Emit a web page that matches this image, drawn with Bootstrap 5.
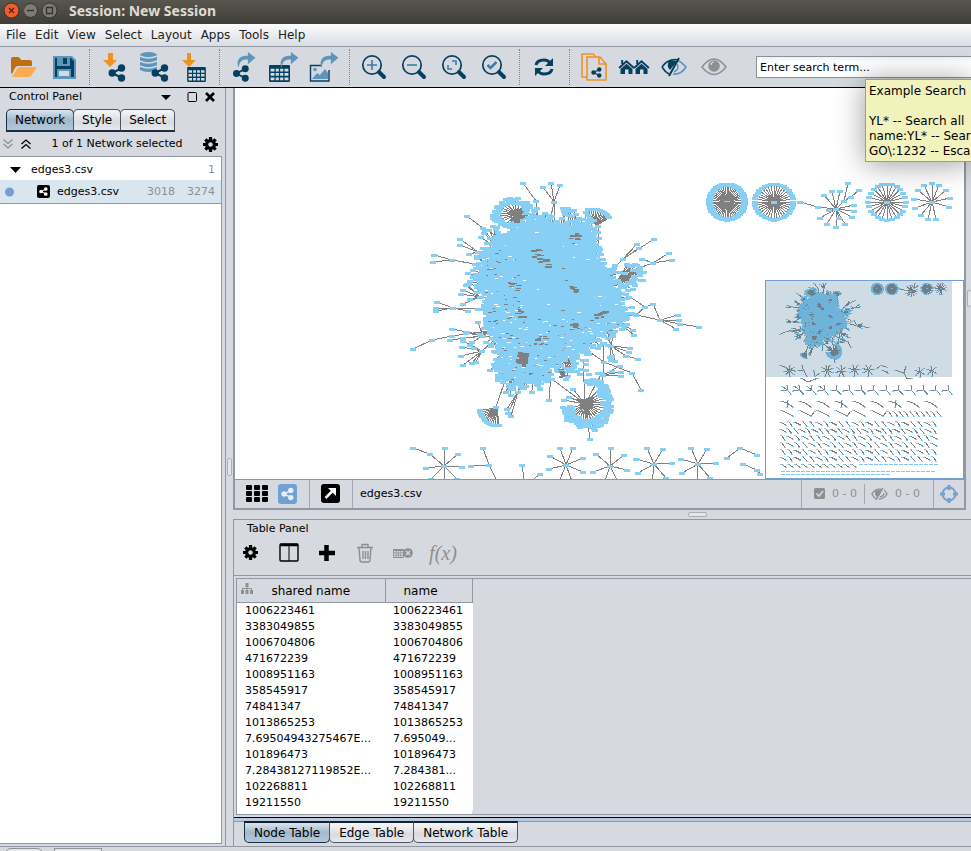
<!DOCTYPE html>
<html lang="en">
<head>
<meta charset="utf-8">
<meta name="viewport" content="width=device-width, initial-scale=1">
<title>Session: New Session</title>
<link rel="stylesheet" href="https://cdn.jsdelivr.net/npm/bootstrap@5.3.0/dist/css/bootstrap.min.css">
<style>
:root{--face:#d6d9df;--line:#9297a1;--navy:#04405f;--sky:#5e96ba;--amber:#ee9322;--off:#8e8f91}
body{font:12px/16px "DejaVu Sans",sans-serif;color:#000;background:var(--face)}
button{font:inherit;color:inherit;background:none;border:0;padding:0}
svg{display:block}
.t11{font-size:11px}
.grey{color:var(--off)}
.titlebar{height:24px;padding-left:3px;background:linear-gradient(#58564e,#3f3d38);color:#dfdbd2;font:bold 14px/22px "Noto Sans",sans-serif}
.titlebar h1{font:inherit;margin:0 0 0 11px}
.winbtn{width:17px;height:20px}
.menus{height:23px;gap:9px;padding-left:6px;background:linear-gradient(#fcfcfd,#d9dce1);border-bottom:1px solid var(--line)}
.menus a{color:#222;text-decoration:none}
.tools{height:41px;padding-left:4px;border-bottom:1px solid #000}
.tools button{width:40px;height:40px;flex:none}
.dots{width:10px;flex:none;display:flex;justify-content:center;padding:2px 0}
.dots::before{content:"";border-left:1px dotted #7d828c}
.find{height:22px;margin-left:22px;padding:0 3px;font-size:11px;border:1px solid #8c9098;border-right:0;background:linear-gradient(#f0f0f2,#fff 5px);min-width:0;border-radius:0}
.find::placeholder{color:#000;opacity:1}
.tip{top:79px;right:0;width:106px;height:83px;padding:4px 0 0 3px;background:#f2f2bd;border:1px solid #989a9f;border-right:0;line-height:15px;white-space:pre;overflow:hidden;box-shadow:0 2px 30px rgba(0,0,0,.4);z-index:5}
.side{width:225px;flex:none;padding-bottom:2px}
.panehead{height:21px;padding:0 8px 3px 9px}
.sidetabs{padding-left:6px}
.tab{height:22px;border:1px solid #4c5563;background:linear-gradient(#f6f7f8,#d8dbe1 60%,#e6e8ec)}
.sidetabs .tab{height:23px;border-bottom:2px solid #222b3a;border-radius:5px 5px 0 0;margin-right:-1px;padding:0 8px}
.tab.on{background:linear-gradient(#dce5ed,#a2b8cc 50%,#b5c8da);border-color:#1c2c40}
.netbar{height:24px;padding:0 7px 0 3px}
.tree{background:#fff;border:1px solid var(--line);border-left:0;margin-right:3px}
.trow{height:23px;padding-right:6px}
.trow.sel{height:24px;padding-top:1px;background:#dae6ef;border-bottom:1px solid var(--line)}
.trow:first-child{padding-top:2px}
.vsplit{width:8px;flex:none;border-left:1px solid var(--line)}
.grip{border:1px solid #a9adb5;border-radius:2px;background:#e4e6ea}
.vsplit .grip{width:5px;height:18px}
.frame{min-width:0;border:solid var(--line);border-width:0 2px 2px}
.edge{width:5px;flex:none}
.edge .grip{width:5px;height:17px;border-right:0;margin-left:1px}
.canvas{background:#fff;overflow:hidden;min-height:200px}
.bird{right:0;bottom:0;width:199px;height:199px;background:#fff;border:1px solid #709fd0}
.statusbar{height:29px;border-top:1px solid var(--line)}
.gridbtn{margin:0 10px 0 11px}
.sharebtn{margin-right:11px}
.popbtn{margin:0 11px}
.docname{margin-left:7px}
.count{gap:7px;padding:0 7px 0 12px}
.hidden-count{padding:0 13px 0 6px}
.aim{padding:0 5px}
.vl{width:1px;align-self:stretch;background:#a4a8b1;flex:none}
.hsplit{height:9px;padding-left:455px}
.hsplit .grip{width:19px;height:5px}
.lower{border:solid var(--line);border-width:1px 0 0 1px}
.lowhead{padding-left:13px;line-height:18px}
.lowtools button{width:38px;height:30px}
.lowtools{padding-bottom:7px;border-bottom:1px solid var(--line)}
.lowtools svg{margin:0 auto}
.holder{margin:2px 0 0 2px;border:solid var(--line);border-width:1px 0 1px 1px}
.grid{width:235px;table-layout:fixed;border-collapse:collapse;background:#fff}
.grid th{height:24px;font-weight:400;text-align:center;background:var(--face);border-right:1px solid var(--line);border-bottom:1px solid var(--line);padding:1px 0 0}
.grid td{height:16px;line-height:16px;font-size:11px;padding:0 0 0 8px;white-space:nowrap}
.endpad{height:3px;width:235px;background:#fff}
.band{margin-top:2px;height:5px;border-top:1px solid #000;border-bottom:1px solid var(--line);background:#b5cadf}
.lowtabs{padding-left:10px;height:25px;margin-top:-1px}
.lowtabs .tab{border-top:2px solid #14202e;border-radius:0 0 5px 5px;margin-right:-1px;padding:0 9px;line-height:18px}
.foot{height:5px;border-top:1px solid var(--line);padding:1px 0 0 5px;overflow:hidden;gap:11px}
.foot span{width:38px;height:9px;border:1px solid #8d939d;background:#e4e7eb}
.foot span + span{width:48px}
.fx{font:italic 20px/28px "Liberation Serif",serif}
.e{stroke:#808080;fill:none}.n{fill:#87cff5}
.bird .n{fill:#7fc9f2}
</style>
<script src="https://cdn.jsdelivr.net/npm/bootstrap@5.3.0/dist/js/bootstrap.bundle.min.js"></script>
</head>
<body class="vh-100 d-flex flex-column overflow-hidden position-relative">

<svg width="0" height="0" class="position-absolute" aria-hidden="true">
  <defs>
    <symbol id="share" viewBox="0 0 18 18"><path d="M14 4 4 9l10 5" fill="none" stroke="currentColor" stroke-width="2"/><circle cx="13.500" cy="4" r="3.700" fill="currentColor"/><circle cx="4.200" cy="9" r="3.700" fill="currentColor"/><circle cx="13.500" cy="14" r="3.700" fill="currentColor"/></symbol>
    <symbol id="cells" viewBox="0 0 20 16"><path fill-rule="evenodd" fill="currentColor" d="M1 0h18q1 0 1 1v14q0 1-1 1H1q-1 0-1-1V1q0-1 1-1zM1.500 3.500v2.700h3.700V3.500zM6.400 3.500v2.700h3V3.500zM10.600 3.500v2.700h3V3.500zM14.800 3.500v2.700h3.700V3.500zM1.500 7.500v2.700h3.700V7.500zM6.400 7.500v2.700h3V7.500zM10.600 7.500v2.700h3V7.500zM14.800 7.500v2.700h3.700V7.500zM1.500 11.700v2.700h3.700v-2.700zM6.400 11.700v2.700h3v-2.700zM10.600 11.700v2.700h3v-2.700zM14.800 11.700v2.700h3.700v-2.700z"/></symbol>
    <symbol id="gear" viewBox="0 0 16 16"><path d="M8 0v16M0 8h16M2.500 2.500l11 11M13.500 2.500l-11 11" stroke="currentColor" stroke-width="3.400"/><circle cx="8" cy="8" r="5.800" fill="currentColor"/><circle cx="8" cy="8" r="2.400" fill="#d6d9df"/></symbol>
    <symbol id="lens" viewBox="0 0 40 40"><path d="m25 25 5 5" stroke="#04405f" stroke-width="4" stroke-linecap="round"/><circle cx="18" cy="18" r="9.200" fill="none" stroke="#04405f" stroke-width="1.700"/></symbol>
    <symbol id="sweep" viewBox="0 0 20 18"><path fill="#5e96ba" d="M2 17C-1 8 4 3 12 4V0l8 6-8 7V8C6 7 3 10 2 17z"/></symbol>
    <symbol id="house" viewBox="0 0 16 14"><path fill="#04405f" d="M8 3.800 14 9v5h-4V9.500H6.500V14H2V9z"/><path fill="none" stroke="#04405f" stroke-width="1.900" d="M.6 8 8 1.300 15.400 8M3.700 0v4"/></symbol>
  </defs>
</svg>

<header class="titlebar d-flex">
  <button class="winbtn" aria-label="Close"><svg width="17" height="20"><circle cx="8.500" cy="10.500" r="7.500" fill="#ee5d2c" stroke="#34322e"/><path d="m6 8 5 5m0-5-5 5" stroke="#5a2411" stroke-width="1.300"/></svg></button>
  <button class="winbtn ms-1" aria-label="Minimize"><svg width="17" height="20"><circle cx="6.500" cy="10.500" r="7" fill="#7d7b73" stroke="#34322e"/><path d="M3 10.500h7" stroke="#34322e" stroke-width="1.300"/></svg></button>
  <button class="winbtn" aria-label="Maximize"><svg width="17" height="20"><circle cx="8.500" cy="10.500" r="7.500" fill="#7d7b73" stroke="#34322e"/><path d="M5.500 7.500h6v6h-6z" fill="none" stroke="#34322e" stroke-width="1.300"/></svg></button>
  <h1>Session: New Session</h1>
</header>
<nav class="menus d-flex align-items-center" aria-label="Menu">
  <a href="#">File</a><a href="#">Edit</a><a href="#">View</a><a href="#">Select</a><a href="#">Layout</a><a href="#">Apps</a><a href="#">Tools</a><a href="#">Help</a>
</nav>

<div class="tools d-flex flex-shrink-0" role="toolbar" aria-label="Main tools">
  <button aria-label="Open"><svg width="40" height="40"><path fill="#bf6f0e" d="M7 12q0-2 2-2h5q2 0 3 3h9q2 0 2 2v4H14q-2 0-3 2l-3 6q-1 0-1-2z"/><path fill="#fbab4d" d="m8 30 5-8q1-2 3-2h17l-6 9q-1 1-3 1z"/></svg></button>
  <button aria-label="Save"><svg width="40" height="40"><path fill="#5e96ba" d="M9 9h19l4 4v19H9z"/><path fill="#04405f" d="M11 11h2v8h13v-8h1l3 3v16H11z"/><path fill="#5e96ba" d="M13 11h12v7H13zM13 22h14v8H13z"/><path fill="#04405f" d="M19 11h4v6h-4z"/><path fill="#d6d9df" d="M15 24h10v5H15z"/></svg></button>
  <span class="dots"></span>
  <button aria-label="Import network"><svg width="40" height="40" color="#04405f"><path fill="#ee9322" d="M14 6h5v7h4l-7 7-7-7h5z"/><use href="#share" x="14" y="17" width="18" height="18"/></svg></button>
  <button aria-label="Import from database"><svg width="40" height="40" color="#04405f"><path fill="#5e96ba" d="M6 8v15q8 4 17 0V8z"/><ellipse cx="14.500" cy="8" rx="8.500" ry="3" fill="#5e96ba"/><path d="M6 9q8 4 17 0M6 14q8 4 17 0M6 19q8 4 17 0" fill="none" stroke="#d6d9df" stroke-width="1.500"/><use href="#share" x="17" y="17" width="18" height="18"/></svg></button>
  <button aria-label="Import table"><svg width="40" height="40" color="#04405f"><path fill="#ee9322" d="M13 6h4v7h5l-7 7-7-7h5z"/><use href="#cells" x="13" y="20" width="19" height="15"/></svg></button>
  <span class="dots"></span>
  <button aria-label="Export network"><svg width="40" height="40" color="#04405f"><use href="#sweep" x="12" y="5" width="20" height="17"/><use href="#share" x="8" y="18" width="18" height="17"/></svg></button>
  <button aria-label="Export table"><svg width="40" height="40" color="#04405f"><use href="#cells" x="5" y="18" width="21" height="17"/><use href="#sweep" x="15" y="5" width="20" height="17"/></svg></button>
  <button aria-label="Export image"><svg width="40" height="40"><path fill="none" stroke="#04405f" stroke-width="1.400" d="M18 18.500H6.500v15.500H25V23"/><path fill="#5e96ba" d="m8 32 5-6 3 2 5-6 3 4v6z"/><circle cx="11" cy="22.500" r="1.800" fill="#5e96ba"/><use href="#sweep" x="15" y="5" width="20" height="17"/></svg></button>
  <span class="dots"></span>
  <button aria-label="Zoom in"><svg width="40" height="40"><use href="#lens" width="40" height="40"/><path d="M13 18h10M18 13v10" stroke="#3c7ca8" stroke-width="1.600"/></svg></button>
  <button aria-label="Zoom out"><svg width="40" height="40"><use href="#lens" width="40" height="40"/><path d="M13 18h10" stroke="#3c7ca8" stroke-width="1.600"/></svg></button>
  <button aria-label="Fit content"><svg width="40" height="40"><use href="#lens" width="40" height="40"/><path d="M18 14h4v4M18 22h-4v-4" fill="none" stroke="#3c7ca8" stroke-width="1.600"/></svg></button>
  <button aria-label="Fit selected"><svg width="40" height="40"><use href="#lens" width="40" height="40"/><path d="m13.500 18 3 3 6-6" fill="none" stroke="#3c7ca8" stroke-width="2.500"/></svg></button>
  <span class="dots"></span>
  <button aria-label="Refresh"><svg width="40" height="40"><path fill="none" stroke="#04405f" stroke-width="3" d="M12 18q1-5 8-5 4 0 6 3M28 22q-1 5-8 5-4 0-6-3"/><path fill="#04405f" d="M29 11v8h-8zM11 29v-8h8z"/></svg></button>
  <span class="dots"></span>
  <button aria-label="New network from selection"><svg width="40" height="40" color="#04405f"><path fill="#d6d9df" stroke="#ee9322" stroke-width="1.600" d="M8 7h11l4 4v19H8z"/><path fill="#d6d9df" stroke="#ee9322" stroke-width="1.600" d="M13 10h13l6 7v16H13zM25 10v7h7"/><use href="#share" x="17" y="20" width="11" height="11"/></svg></button>
  <button aria-label="First neighbors"><svg width="40" height="40"><use href="#house" x="4" y="13" width="17" height="14"/><use href="#house" x="19" y="13" width="17" height="14"/></svg></button>
  <button aria-label="Hide selected"><svg width="40" height="40"><path fill="none" stroke="#5e96ba" stroke-width="1.600" d="M23 13q5 2 9 7-5 8-13 7M23 17q3 5-3 8"/><path fill="none" stroke="#04405f" stroke-width="1.600" d="M8 20q6-9 17-7M8 20q3 5 7 7"/><path fill="#04405f" d="M15 14h8l-7 9q-4-4-1-9z"/><path stroke="#04405f" stroke-width="2" d="M25 11 15 29"/></svg></button>
  <button aria-label="Show all"><svg width="40" height="40"><path fill="none" stroke="#8e8f91" stroke-width="1.500" d="M8 20q12-16 24 0-12 15-24 0z"/><circle cx="20" cy="19" r="5.800" fill="#8e8f91"/><path d="M17 18q0-3 3-3" stroke="#d6d9df" fill="none" stroke-width="1.200"/></svg></button>
  <input class="find flex-fill align-self-center" type="search" placeholder="Enter search term..." aria-label="Search">
</div>
<div class="tip position-absolute" role="tooltip">Example Search

YL* -- Search all
name:YL* -- Sear
GO\:1232 -- Esca</div>

<div class="d-flex flex-fill" style="min-height:0">
  <aside class="side d-flex flex-column">
    <div class="panehead t11 d-flex align-items-center">
      <span class="me-auto">Control Panel</span>
      <button aria-label="Panel menu"><svg width="10" height="6"><path d="M0 1h10L5 6z"/></svg></button>
      <button class="ms-3" aria-label="Float"><svg width="10" height="10"><rect x="1" y=".5" width="8.500" height="9" rx="1" fill="none" stroke="#000"/></svg></button>
      <button class="ms-1 ps-1" aria-label="Close panel"><svg width="12" height="10"><path d="m1 1 8 8m0-8-8 8" stroke="#000" stroke-width="2.600"/></svg></button>
    </div>
    <div class="sidetabs d-flex" role="tablist">
      <button class="tab on" role="tab" aria-selected="true">Network</button><button class="tab" role="tab">Style</button><button class="tab" role="tab">Select</button>
    </div>
    <div class="netbar t11 d-flex align-items-center">
      <button aria-label="Expand all"><svg width="10" height="10" fill="none" stroke="#8e8f91" stroke-width="1.200"><path d="m.5.5 4.500 4 4.500-4M.5 5 5 9l4.500-4"/></svg></button>
      <button class="ms-2" aria-label="Collapse all"><svg width="10" height="10" fill="none" stroke="#000" stroke-width="1.300"><path d="M.5 5 5 1l4.500 4M.5 9.500 5 5.500l4.500 4"/></svg></button>
      <span class="mx-auto">1 of 1 Network selected</span>
      <button aria-label="Network options"><svg width="15" height="15"><use href="#gear" width="15" height="15"/></svg></button>
    </div>
    <div class="tree flex-fill t11">
      <div class="trow d-flex align-items-center"><svg class="mx-2 px-0" width="15" height="6"><path d="M2 0h11L7.500 6z"/></svg><span class="me-auto">edges3.csv</span><span class="grey">1</span></div>
      <div class="trow sel d-flex align-items-center"><svg width="57" height="16"><circle cx="9.500" cy="8" r="4.500" fill="#72a0d2"/><rect x="37" y="1" width="13" height="13" rx="2"/><g color="#fff"><use href="#share" x="39" y="3" width="9" height="9"/></g></svg><span class="me-auto">edges3.csv</span><span class="grey me-2 pe-1">3018</span><span class="grey">3274</span></div>
    </div>
  </aside>
  <div class="vsplit d-flex align-items-center justify-content-center"><span class="grip"></span></div>

  <main class="d-flex flex-column flex-fill" style="min-width:0">
    <div class="d-flex flex-fill">
    <section class="frame flex-fill d-flex flex-column">
      <div class="canvas flex-fill position-relative">
        <svg id="net" class="position-absolute w-100 h-100" shape-rendering="crispEdges" role="img" aria-label="Network view"></svg>
        <svg id="bird" class="bird position-absolute" shape-rendering="crispEdges" role="img" aria-label="Overview"></svg>
      </div>
      <div class="statusbar t11 d-flex align-items-center">
        <button class="gridbtn" aria-label="Grid view"><svg width="22" height="18"><g id="dotsgrid"></g></svg></button>
        <button class="sharebtn" aria-label="Network view"><svg width="20" height="20" color="#e6edf5"><rect width="19" height="20" rx="3" fill="#72a0d2"/><use href="#share" x="3" y="3" width="13" height="14"/></svg></button>
        <span class="vl"></span>
        <button class="popbtn" aria-label="Detach view"><svg width="20" height="20"><rect x="0" y="0" width="19" height="19" rx="3"/><path d="m4.500 14 8-8" stroke="#fff" stroke-width="2.500"/><path fill="#fff" d="M7 4h8v8z"/></svg></button>
        <span class="vl"></span>
        <span class="docname me-auto">edges3.csv</span>
        <span class="vl"></span>
        <span class="grey count d-flex align-items-center"><svg width="11" height="11"><rect width="11" height="11" rx="1.500" fill="#8e8f91"/><path d="m2.500 5.500 2.500 2.500 4-5" fill="none" stroke="#d6d9df" stroke-width="1.600"/></svg>0 - 0</span>
        <span class="vl my-1"></span>
        <span class="grey count hidden-count d-flex align-items-center"><svg width="17" height="12" fill="none" stroke="#8e8f91" stroke-width="1.300"><path d="M.8 6Q5 0 11 1.500M.8 6q2 4 5 5M13 2q2 1 3 4-3 5-8 5M13 5q0 3-4 4"/><path fill="#8e8f91" d="M5 3h5L6 8q-2-2-1-5zM12 0 5 12"/></svg>0 - 0</span>
        <span class="vl"></span>
        <button class="aim" aria-label="Navigator"><svg width="20" height="20" stroke="#72a0d2" fill="none"><circle cx="10" cy="10" r="6.500" stroke-width="2"/><path stroke-width="3" d="M10 1v5M10 14v5M1 10h5M14 10h5"/></svg></button>
      </div>
    </section>
    <div class="edge d-flex align-items-center"><span class="grip"></span></div>
    </div>
    <div class="hsplit d-flex align-items-center flex-shrink-0"><span class="grip"></span></div>
    <section class="lower flex-shrink-0">
      <div class="t11 lowhead">Table Panel</div>
      <div class="lowtools d-flex">
        <button aria-label="Table options"><svg width="20" height="15"><use href="#gear" width="15" height="15"/></svg></button>
        <button aria-label="Columns"><svg width="24" height="20" fill="none" stroke="#000"><rect x="1" y="1" width="18" height="17" rx="1" stroke-width="1.400"/><path d="M1 2h18" stroke-width="2.500"/><path d="M10 2v16"/></svg></button>
        <button aria-label="Add column"><svg width="22" height="18"><path d="M8.500 1v16M1 9h16" stroke="#000" stroke-width="4.500"/></svg></button>
        <button aria-label="Delete column" disabled><svg width="22" height="20" fill="none" stroke="#8e8f91" stroke-width="1.400"><path d="M1 4.500h16M6 4V1.500h6V4M3 5l1 12q0 2 2 2h6q2 0 2-2l1-12M7 8v8M9.500 8v8M12 8v8"/></svg></button>
        <button aria-label="Delete table" disabled><svg width="24" height="12" color="#8e8f91"><use href="#cells" x="0" y="2" width="11" height="9"/><circle cx="15" cy="6" r="4.800" fill="#8e8f91"/><path d="m13 4 4 4m0-4-4 4" stroke="#d6d9df" stroke-width="1.500"/></svg></button>
        <button class="fx grey text-nowrap" disabled>f(x)</button>
      </div>
      <div class="holder">
        <table class="grid">
          <colgroup><col width="148"><col width="87"></colgroup>
          <thead><tr><th class="position-relative"><svg class="position-absolute top-0 start-0 m-1" width="12" height="12" fill="#8e8f91"><path d="M4.500 0h3v4h-3zM0 7h3v4H0zM4.500 7h3v4h-3zM9 7h3v4H9z"/><path d="M1.500 7V5.500h9V7M6 3v4" fill="none" stroke="#8e8f91"/></svg>shared name</th><th class="pe-3">name</th></tr></thead>
          <tbody>
            <tr><td>1006223461</td><td>1006223461</td></tr>
            <tr><td>3383049855</td><td>3383049855</td></tr>
            <tr><td>1006704806</td><td>1006704806</td></tr>
            <tr><td>471672239</td><td>471672239</td></tr>
            <tr><td>1008951163</td><td>1008951163</td></tr>
            <tr><td>358545917</td><td>358545917</td></tr>
            <tr><td>74841347</td><td>74841347</td></tr>
            <tr><td>1013865253</td><td>1013865253</td></tr>
            <tr><td>7.69504943275467E...</td><td>7.695049...</td></tr>
            <tr><td>101896473</td><td>101896473</td></tr>
            <tr><td>7.28438127119852E...</td><td>7.284381...</td></tr>
            <tr><td>102268811</td><td>102268811</td></tr>
            <tr><td>19211550</td><td>19211550</td></tr>
          </tbody>
        </table>
        <div class="endpad"></div>
      </div>
      <div class="band"></div>
      <div class="lowtabs d-flex" role="tablist">
        <button class="tab on" role="tab" aria-selected="true">Node Table</button><button class="tab" role="tab">Edge Table</button><button class="tab" role="tab">Network Table</button>
      </div>
    </section>
  </main>
</div>
<footer class="foot d-flex flex-shrink-0"><span class="rounded-top"></span><span></span></footer>

<script>
(function () {
  let seed = 11;
  const rnd = () => (seed = (seed * 16807) % 2147483647) / 2147483647;
  const rr = (a, b) => a + (b - a) * rnd();
  const edges = [], nodes = [], over = [], grey = [], holes = [];
  const E = (a, b) => edges.push([a[0], a[1], b[0], b[1]]);
  const N = (p) => nodes.push([p[0], p[1]]);
  const chain = (...pts) => pts.forEach((p, i) => { N(p); if (i) E(pts[i - 1], p); });
  const hub = (c, leaves, every = 1) => { N(c); leaves.forEach((p, i) => { N(p); if (i % every === 0) E(c, p); }); };
  const ring = (cx, cy, rx, ry, n, a0 = 0, a1 = 2 * Math.PI, jit = 0) => {
    const l = [];
    for (let i = 0; i < n; i++) { const a = a0 + (a1 - a0) * i / n, k = 1 - rnd() * jit; l.push([cx + rx * k * Math.cos(a), cy + ry * k * Math.sin(a)]); }
    return l;
  };
  /* main component outline */
  const poly = [[500,242],[512,230],[535,225],[560,224],[575,226],[590,224],[594,245],[598,263],[610,272],[612,288],[622,303],[624,318],[612,329],[600,333],[588,343],[578,352],[562,350],[552,365],[545,381],[520,383],[502,378],[497,365],[500,350],[490,331],[486,315],[487,297],[478,285],[480,262],[490,252]];
  const inside = (x, y) => { let c = false; for (let i = 0, j = poly.length - 1; i < poly.length; j = i++) { const [a, b] = poly[i], [d, e] = poly[j]; if ((b > y) !== (e > y) && x < (d - a) * (y - b) / (e - b) + a) c = !c; } return c; };
  poly.forEach((p, i) => {
    const q = poly[(i + 1) % poly.length], len = Math.hypot(q[0] - p[0], q[1] - p[1]);
    for (let k = 0; k < len * 0.8; k++) {
      const t = rnd(), x = p[0] + (q[0] - p[0]) * t, y = p[1] + (q[1] - p[1]) * t, dx = x - 548, dy = y - 300, d = Math.hypot(dx, dy), f = rnd() * rnd() * 14 - 1;
      const o = [x + dx / d * f, y + dy / d * f]; N(o); if (f > 3) E([x - dx / d * 5, y - dy / d * 5], o);
    }
  });
  for (let i = 0; i < 420; i++) { const x = rr(478, 622), y = rr(228, 380); if (inside(x, y) && (x < 518 || y > 318 || rnd() < .1)) (rnd() < .45 ? grey : holes).push([x, y, rr(1, 4), 1]); }
  [[543,261],[537,253],[571,290],[519,313],[576,328],[600,312],[575,238],[560,372],[514,286],[522,357],[516,214],[540,340]].forEach(([x, y], k) => { const big = k === 9 || k === 10; for (let i = 0; i < (big ? 26 : 8); i++) over.push([x + rr(-6, 3), y + rr(-5, 5), rr(3, 7), rr(1, big ? 5 : 2)]); });
  hub([516,214], ring(513, 213, 22, 15, 66, 0, 2 * Math.PI, .4), 3);
  chain([523,183],[536,201],[537,225]);
  hub([554,202], [[551,183],[543,187],[560,185],[554,228],[549,226]]);
  ring(592, 222, 18, 13, 12, -1.8, -.2).forEach((p) => { N(p); E([596,226], p); }); chain([598,226],[598,250]);
  for (let i = 0; i < 30; i++) { const p = [rr(532, 592), rr(208, 227)]; N(p); E(p, [p[0] + rr(-2, 2), 232]); }
  chain([467,216],[483,228],[500,238]);
  for (let i = 0; i < 26; i++) { const p = [rr(478, 505), rr(226, 260)]; N(p); E(p, [500, 250]); }
  hub([478,252], [[460,239],[460,245],[469,254]]);
  hub([452,260], [[434,255],[433,262],[475,264]]);
  hub([480,297], [[467,284],[463,290],[461,294],[463,304],[470,299],[466,285],[488,294]]);
  hub([453,308], [[437,302],[436,308],[436,311],[478,309],[468,311]]);
  hub([623,259], [[654,239],[637,244],[639,248],[610,272]]);
  hub([653,263], [[669,253],[672,260],[625,273],[642,259]]);
  hub([618,280], ring(626, 276, 20, 15, 30, -1.5, 1.9, .6));
  chain([610,290],[626,294],[645,307],[653,304],[660,320]);
  chain([615,315],[636,315],[645,307]);
  hub([660,320], [[636,315],[678,315],[679,320],[676,329]]); chain([660,320],[680,324],[699,327]);
  chain([413,349],[432,340],[452,336],[495,330]);
  chain([452,329],[467,332],[495,338]);
  hub([482,351], [[462,347],[461,356],[463,365],[476,362],[470,345],[463,341],[474,348],[500,335],[472,363]]);
  hub([483,336], [[450,340],[463,338],[466,333],[478,322],[472,342],[498,324]]);
  chain([496,407],[506,378]); ring(498, 405, 19, 21, 13, 1.5, 3).forEach((p) => { N(p); E([497,408], p); });
  chain([511,395],[509,376]); hub([518,392], [[507,409],[508,413],[511,416],[522,380]]);
  chain([549,400],[551,374]);
  hub([585,404], ring(587, 405, 25, 25, 110, -.9, 3.1, .4), 5); ring(592, 392, 16, 13, 28, -2, .4, .4).forEach(N);
  for (let i = 0; i < 22; i++) over.push([rr(576, 589), rr(397, 412), rr(3, 8), rr(1, 3)]);
  [[552,379],[602,373],[583,360],[564,400],[569,397],[573,389],[590,439],[595,430]].forEach((p) => { N(p); E([585,404], p); });
  hub([565,360], ring(566, 363, 20, 18, 44, 0, 6.28, .7), 2);
  hub([603,375], [[620,366],[621,372],[621,376],[598,373],[604,343],[602,392]]);
  chain([587,350],[604,362],[632,373],[641,390]);
  hub([611,346], [[630,348],[626,356],[629,352],[610,357],[615,361],[603,343],[608,338],[613,336],[606,325]]); chain([611,346],[626,356],[638,359]);
  hub([618,322], [[633,330],[634,335],[622,329]]);
  for (let i = 0; i < 16; i++) N([rr(575, 612), rr(330, 375)]);
  /* separate stars */
  hub([727,202], ring(727, 202, 18, 18, 48)); ring(727, 202, 17, 17, 70).forEach(N);
  for (let i = 0; i < 10; i++) grey.push([rr(720, 728), rr(199, 205), 7, 1]);
  hub([774,202], ring(774, 202, 19, 18, 36));
  hub([836,209], [[824,195],[832,191],[840,191],[854,205],[854,211],[852,217],[845,224],[836,227],[827,224],[820,218],[829,210],[839,218],[844,201]]);
  chain([800,202],[818,207],[836,209]); chain([848,183],[844,201]); chain([859,190],[851,197],[844,201]);
  hub([887,202], ring(887, 202, 19, 18, 24));
  hub([932,202], [[924,185],[932,183],[939,185],[946,190],[950,198],[949,207],[936,219],[928,219],[921,215],[915,208],[914,199],[918,190]]);
  hub([444,466], [[445,448],[458,454],[462,467],[457,479],[431,479],[426,468],[430,454],[444,484]]); chain([413,448],[430,454]);
  chain([483,448],[489,465],[499,485]); chain([471,466],[489,465]);
  chain([522,465],[525,486]); chain([540,474],[525,486]);
  hub([566,465], [[560,448],[573,448],[583,458],[583,472],[573,484],[558,484],[549,469],[550,456]]);
  hub([610,466], [[611,448],[624,455],[627,470],[619,484],[604,484],[593,472],[596,454]]);
  hub([654,464], [[647,448],[663,449],[672,463],[666,478],[652,484],[638,473],[636,459]]);
  hub([698,464], [[691,448],[707,449],[716,463],[710,478],[697,484],[682,473],[681,459]]);
  chain([727,458],[740,448],[757,455]); chain([743,464],[757,470],[760,474]);

  const draw = (el, fx, fy, k, w, h, extra) => {
    const r = (a) => a.map(([x, y, a1, b1]) => { const W = Math.max(1, Math.round(a1 * k)), H = Math.max(1, Math.round(b1 * k)); return `M${Math.round(fx(x))} ${Math.round(fy(y))}h${W}v${H}h-${W}z`; }).join("");
    const nd = nodes.map(([x, y]) => `M${Math.round(fx(x) - w / 2)} ${Math.round(fy(y) - h / 2)}h${w}v${h}h-${w}z`).join("");
    el.innerHTML = `<path class="e" d="${edges.map(([a, b, c, d]) => `M${fx(a).toFixed(1)} ${fy(b).toFixed(1)}L${fx(c).toFixed(1)} ${fy(d).toFixed(1)}`).join("")}"/>`
      + `<path class="n" d="M${poly.map(([x, y]) => fx(x).toFixed(1) + " " + fy(y).toFixed(1)).join("L")}z"/><path class="n" fill-rule="nonzero" d="${nd}"/>`
      + `<path fill="#fff" d="${k < 1 ? "" : r(holes)}"/><path fill="#808080" d="${r(k < 1 ? grey.filter((g, i) => i % 3 === 0) : grey)}${r(over)}"/>` + (extra || "");
  };
  draw(document.getElementById("net"), (x) => x - 235, (y) => y - 88, 1, 6, 3);

  /* overview: small components listed row by row */
  let e = "", n = "";
  const L = (...p) => { e += "M" + p.map(([x, y]) => `${x - 766} ${y - 282}`).join("L"); const q = [p[0], p[p.length - 1]]; q.forEach(([x, y]) => n += `M${Math.round(x - 767)} ${Math.round(y - 282)}h2v1h-2z`); };
  L([895,371],[904,374],[906,367]); L([904,374],[907,380],[912,379]);
  L([801,379],[808,383],[818,379]);
  [[920,373],[932,372]].forEach(([x, y]) => { for (let a = 0; a < 6; a++) L([x, y], [x + 5 * Math.cos(a + .5), y + 5 * Math.sin(a + .5)]); });
  for (let i = 0; i < 14; i++) { const x = 784 + i * 12.4; L([x + 3, 386], [x + 3, 391], [x + 7, 395]); L([x - 3, 391 + i % 2], [x + 3, 391]); if (i < 4) L([x - 2, 387], [x + 3, 391]); }
  for (let i = 0; i < 9; i++) { const x = 781 + i * 18; L([x, 402], [x + 6, 404], [x + 12, 408]); if (i % 3 === 0) L([x + 7, 401], [x + 6, 408]); }
  for (let i = 0; i < 6; i++) { const x = 781 + i * 18; L([x, 411], [x + 6, 414], [x + 12, 417]); if (i % 2) L([x + 12, 417], [x + 16, 412]); }
  for (let i = 0; i < 10; i++) L([888 + i * 5.4, 412], [892 + i * 5.4, 417]);
  [422,429,436,443,450,457].forEach((y, j) => { for (let i = 0; i < (j === 1 ? 25 : 22); i++) { const x = 781 + i * (j === 1 ? 6.3 : 7.2); (i * 3 + j) % 5 > 1 ? L([x, y], [x + 4, y + 5]) : L([x - 1, y + 1], [x + 5, y + 4]); } });
  for (let i = 0; i < 11; i++) L([781 + i * 7, 465], [786 + i * 7, 468]);
  const D = (x0, x1, y) => { for (let x = x0; x < x1; x += 5) n += `M${x - 766} ${y - 282}h4v1h-4z`; };
  D(859, 936, 465); D(781, 936, 472); D(781, 889, 475);
  draw(document.getElementById("bird"), (x) => 14 + (x - 413) * .31, (y) => 2 + (y - 183) * .31, .4, 2, 1,
    `<path class="e" d="${e}"/><path class="n" d="${n}"/><rect width="186" height="96" fill="#407390" fill-opacity=".25"/>`);

  let g = "";
  for (let i = 0; i < 3; i++) for (let j = 0; j < 3; j++) g += `<rect x="${i * 8}" y="${j * 6}" width="6" height="5" rx="1"/>`;
  document.getElementById("dotsgrid").innerHTML = g;
})();
</script>
</body>
</html>
